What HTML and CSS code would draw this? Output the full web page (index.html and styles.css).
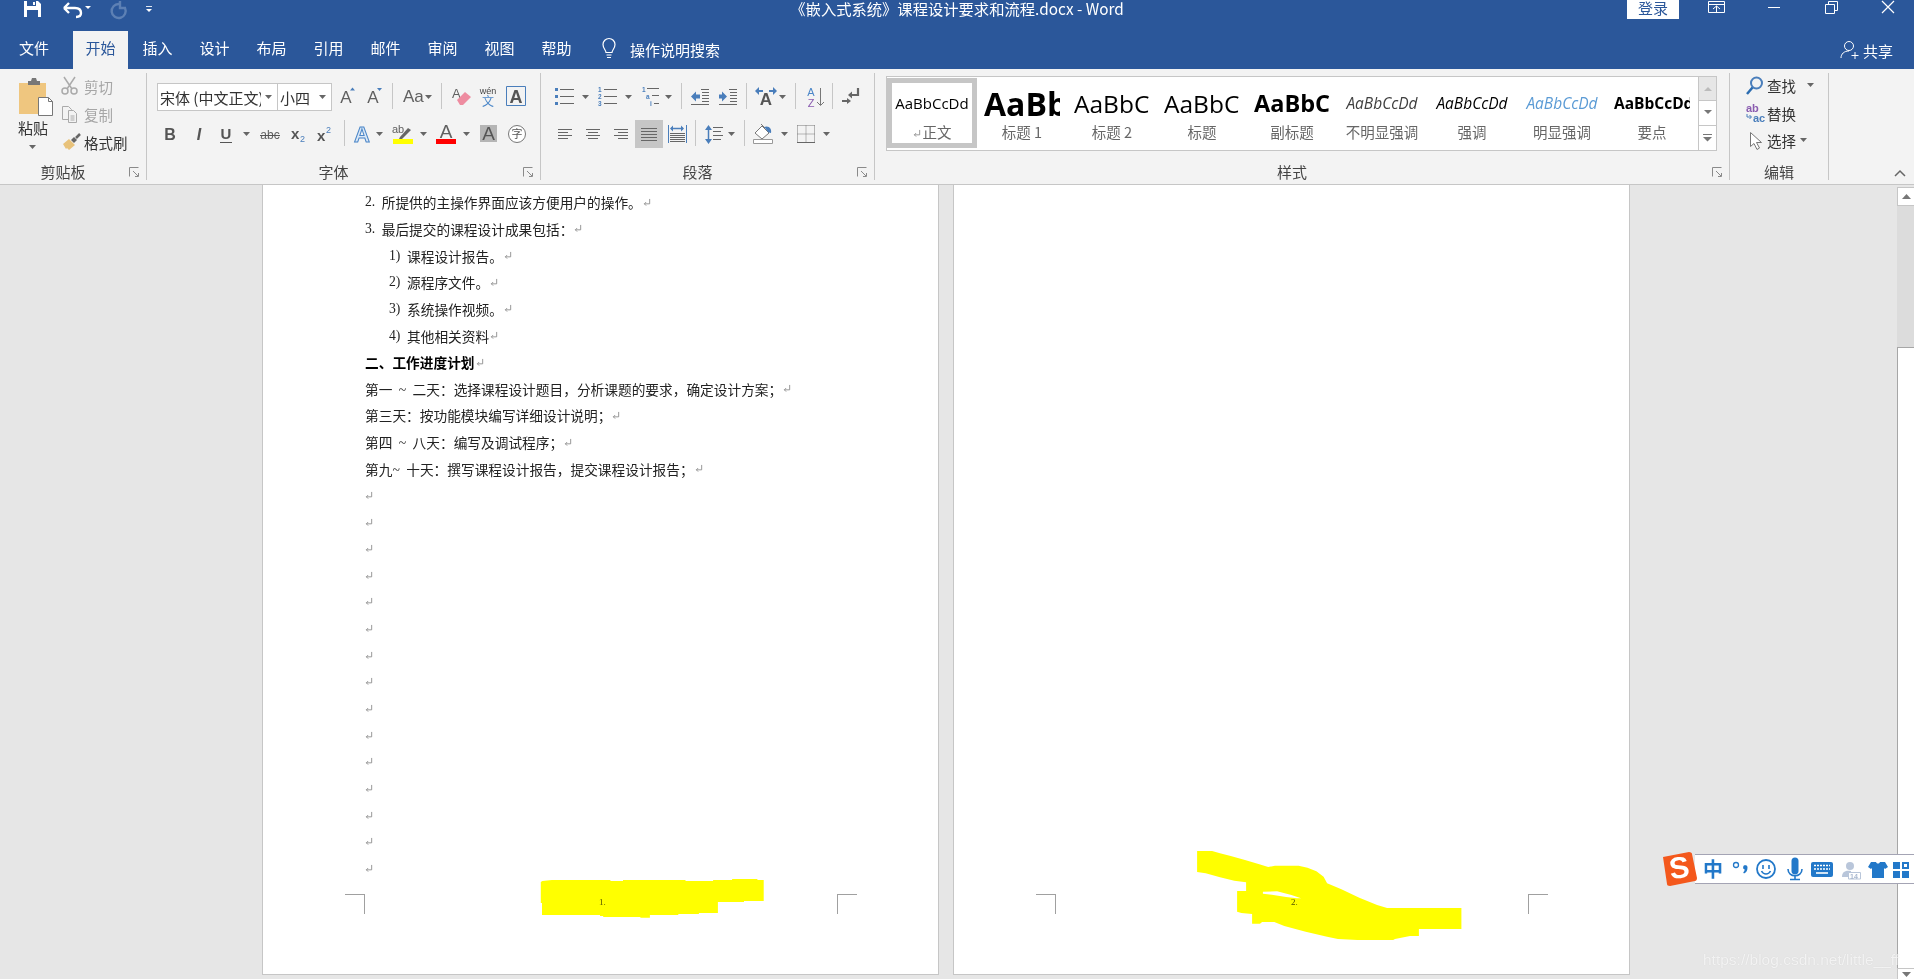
FILE: index.html
```html
<!DOCTYPE html>
<html lang="zh-CN">
<head>
    <meta charset="UTF-8">
    <title>《嵌入式系统》课程设计要求和流程.docx - Word</title>
    <link rel="stylesheet" href="styles.css">
</head>
<body>
    <svg class="defs" width="0" height="0">
        <symbol id="ret" viewBox="0 0 9 10"><path d="M7.500 1v5.500H1.500M3.500 4.500l-2 2 2 2" fill="none" stroke="#8c8c8c"/></symbol>
    </svg>

    <!-- Title bar -->
    <header class="titlebar">
        <div class="qat">
            <svg width="37" height="31" viewBox="0 0 37 31"><path d="M0 1h14l3 3v13H0z" fill="#fff"/><path d="M3 1h9v5H3zM3 10h11v7H3z" fill="#2b579a"/><path d="M9 2h2v3H9z" fill="#fff"/></svg>
            <svg width="46" height="31" viewBox="0 0 46 31"><path d="M3 8l5-5M3 8l5 5M3 8h11c4 0 6 2 6 5s-2 4-5 4" fill="none" stroke="#fff" stroke-width="2.400"/><path class="car-w" d="M24 6h6l-3 3z"/></svg>
            <svg width="36" height="31" viewBox="0 0 36 31"><path d="M12 4a7 7 0 1 0 6 4M13 1v7h6" fill="none" stroke="#5d80b4" stroke-width="2.400"/></svg>
            <svg width="14" height="31" viewBox="0 0 14 31"><path d="M3 6h6v1H3z" fill="#dfe6f1"/><path class="car-w" d="M3 9h6l-3 3z"/></svg>
        </div>
        <div class="doc-title">《嵌入式系统》课程设计要求和流程.docx - Word</div>
        <div class="win-controls">
            <span class="login">登录</span>
            <svg width="57" height="18" viewBox="0 0 57 18"><path d="M20.500 1.500h16v11h-16zM20.500 4.500h16" fill="none" stroke="#fff"/><path d="M25 9l3.500-3 3.500 3M28.500 6v6" fill="none" stroke="#fff"/></svg>
            <svg width="58" height="18" viewBox="0 0 58 18"><path d="M23 7.500h12" stroke="#fff"/></svg>
            <svg width="57" height="18" viewBox="0 0 57 18"><path d="M22.500 4.500h9v9h-9zM25.500 4.500v-3h9v9h-3" fill="none" stroke="#fff"/></svg>
            <svg width="54" height="18" viewBox="0 0 54 18"><path d="M22 1l12 12M34 1L22 13" stroke="#fff" stroke-width="1.200"/></svg>
        </div>
    </header>

    <!-- Ribbon tabs -->
    <nav class="tabs">
        <span class="tab tab-file">文件</span>
        <span class="tab active">开始</span>
        <span class="tab">插入</span>
        <span class="tab">设计</span>
        <span class="tab">布局</span>
        <span class="tab">引用</span>
        <span class="tab">邮件</span>
        <span class="tab">审阅</span>
        <span class="tab">视图</span>
        <span class="tab">帮助</span>
        <div class="tell-me">
            <svg width="14" height="24" viewBox="0 0 14 24"><path d="M4 15.500c0-2.500-3-4-3-8a6 6 0 0 1 12 0c0 4-3 5.500-3 8zM4.500 18h5M5 20.500h4" fill="none" stroke="#fff" stroke-width="1.200"/></svg>
            <span>操作说明搜索</span>
        </div>
        <div class="share">
            <svg width="20" height="20" viewBox="0 0 20 20"><circle cx="9" cy="6" r="4.500" fill="none" stroke="#fff"/><path d="M1 18c0-4 3-7 8-7M11.500 15.500h7M15 12v7" fill="none" stroke="#fff"/></svg>
            <span>共享</span>
        </div>
    </nav>

    <!-- Ribbon -->
    <section class="ribbon">
        <div class="group group-clip">
            <div class="clip-body">
                <div class="paste">
                    <svg class="paste-icon" width="40" height="42" viewBox="0 0 40 42"><path d="M4 7h27v31H4z" fill="#efc67f"/><path d="M13 5h3l1-3h4l1 3h3v4H13z" fill="#777"/><path d="M23.500 21.500h10l4 4v14h-14z" fill="#fff" stroke="#777"/><path d="M33.500 21.500v4h4" fill="none" stroke="#777"/></svg>
                    <span>粘贴</span>
                    <svg width="8" height="6" viewBox="0 0 8 6"><path class="car" d="M0 1h7L3.500 5z"/></svg>
                </div>
                <div class="clip-tools">
                    <div class="clip-tool off">
                        <svg width="22" height="22" viewBox="0 0 22 22"><circle cx="4" cy="16" r="3" fill="none" stroke="#aaa" stroke-width="1.500"/><circle cx="13" cy="16" r="3" fill="none" stroke="#aaa" stroke-width="1.500"/><path d="M3 2l8 12M14 2L6 14" stroke="#aaa" stroke-width="1.500"/></svg>
                        <span>剪切</span>
                    </div>
                    <div class="clip-tool off">
                        <svg width="22" height="22" viewBox="0 0 22 22"><path d="M1.500 3.500h6l3 3v10h-9z" fill="#f3f3f3" stroke="#aaa"/><path d="M7.500 7.500h5l3 3v9h-8z" fill="#f3f3f3" stroke="#aaa"/><path d="M9.500 13h4M9.500 15h4M9.500 17h4" stroke="#aaa"/></svg>
                        <span>复制</span>
                    </div>
                    <div class="clip-tool">
                        <svg width="22" height="22" viewBox="0 0 22 22"><path d="M2 13l6-5 6 6-6 5-2-2-1 1z" fill="#e8c27a"/><path d="M10 9l3-3 3 3-3 3z" fill="#666"/><path d="M15 7l4-4" stroke="#666" stroke-width="2.500"/></svg>
                        <span>格式刷</span>
                    </div>
                </div>
            </div>
            <div class="group-foot"><span class="foot-label">剪贴板</span><svg class="launcher" width="20" height="16" viewBox="0 0 20 16"><path d="M3.500 12.500v-9h9M7 7l5 5M12.500 9v3.500H9" fill="none" stroke="#8a8a8a"/></svg></div>
        </div>

        <div class="group group-font">
            <div class="rows">
                <div class="row">
                    <div class="combo combo-font"><span class="combo-text">宋体 (中文正文)</span><svg width="16" height="6" viewBox="0 0 16 6"><path class="car" d="M4 1h7L7.500 5z"/></svg></div>
                    <div class="combo combo-size"><span class="combo-text">小四</span><svg width="16" height="6" viewBox="0 0 16 6"><path class="car" d="M4 1h7L7.500 5z"/></svg></div>
                    <svg width="28" height="28" viewBox="0 0 28 28"><text class="g" x="14" y="20" text-anchor="middle" font-size="17">A</text><path class="bl" d="M18 7.500l2.500-3 2.500 3z"/></svg>
                    <svg width="28" height="28" viewBox="0 0 28 28"><text class="g" x="13" y="20" text-anchor="middle" font-size="17">A</text><path class="bl" d="M17 5h5l-2.500 3z"/></svg>
                    <i class="sep"></i>
                    <svg width="40" height="28" viewBox="0 0 40 28"><text class="g" x="6" y="19" font-size="17">Aa</text><path class="car" d="M28 12h7l-3.500 4z"/></svg>
                    <i class="sep"></i>
                    <svg width="32" height="28" viewBox="0 0 32 28"><text class="g" x="6" y="15" font-size="13">A</text><path d="M11 17l8-8 6 5-8 8h-3z" fill="#ee8ca0"/></svg>
                    <svg width="20" height="28" viewBox="0 0 20 28"><text x="10" y="11" text-anchor="middle" font-size="9" fill="#444">wén</text><text x="10" y="23" text-anchor="middle" font-size="12" fill="#4a86c8">文</text></svg>
                    <svg width="36" height="28" viewBox="0 0 36 28"><path d="M8.500 3.500h19v19h-19z" fill="none" stroke="#4a7ebb"/><text class="g g-b" x="18" y="20" text-anchor="middle" font-size="18">A</text></svg>
                </div>
                <div class="row">
                    <svg width="26" height="28" viewBox="0 0 26 28"><text class="g g-b" x="13" y="20" text-anchor="middle" font-size="16">B</text></svg>
                    <svg width="32" height="28" viewBox="0 0 32 28"><text class="g g-b" x="16" y="20" text-anchor="middle" font-size="16" font-style="italic">I</text></svg>
                    <svg width="42" height="28" viewBox="0 0 42 28"><text class="g g-b" x="11" y="19" text-anchor="middle" font-size="15">U</text><path d="M5 22.500h12" stroke="#555"/><path class="car" d="M28 12h7l-3.500 4z"/></svg>
                    <svg width="28" height="28" viewBox="0 0 28 28"><text class="g" x="13" y="19" text-anchor="middle" font-size="12">abc</text><path d="M3 15.500h20" stroke="#555"/></svg>
                    <svg width="26" height="28" viewBox="0 0 26 28"><text class="g g-b" x="6" y="19" font-size="15">x</text><text x="15" y="22" font-size="9" fill="#4a7ebb">2</text></svg>
                    <svg width="26" height="28" viewBox="0 0 26 28"><text class="g g-b" x="6" y="21" font-size="15">x</text><text x="15" y="13" font-size="9" fill="#4a7ebb">2</text></svg>
                    <i class="sep sep-wide"></i>
                    <svg width="40" height="28" viewBox="0 0 40 28"><text x="13" y="22" text-anchor="middle" font-size="22" font-weight="700" fill="#dbe8f6" stroke="#4a86c8">A</text><path class="car" d="M27 12h7l-3.500 4z"/></svg>
                    <svg width="44" height="28" viewBox="0 0 44 28"><text class="g" x="3" y="13" font-size="11">ab</text><path d="M11 17l8-9 3 2-9 9h-3z" fill="#666"/><path d="M4 19h20v5H4z" fill="#ff0"/><path class="car" d="M31 12h7l-3.500 4z"/></svg>
                    <svg width="43" height="28" viewBox="0 0 43 28"><text class="g" x="13" y="18" text-anchor="middle" font-size="19">A</text><path d="M3 19h20v5H3z" fill="#f00"/><path class="car" d="M30 12h7l-3.500 4z"/></svg>
                    <svg width="27" height="28" viewBox="0 0 27 28"><path d="M4 5h17v17H4z" fill="#b5b5b5"/><text class="g g-d" x="12.500" y="20" text-anchor="middle" font-size="19">A</text></svg>
                    <svg width="28" height="28" viewBox="0 0 28 28"><circle cx="14" cy="14" r="8.500" fill="#fff" stroke="#777"/><text x="14" y="18" text-anchor="middle" font-size="11" fill="#555">字</text></svg>
                </div>
            </div>
            <div class="group-foot"><span class="foot-label">字体</span><svg class="launcher" width="20" height="16" viewBox="0 0 20 16"><path d="M3.500 12.500v-9h9M7 7l5 5M12.500 9v3.500H9" fill="none" stroke="#8a8a8a"/></svg></div>
        </div>

        <div class="group group-para">
            <div class="rows">
                <div class="row">
                    <svg width="44" height="28" viewBox="0 0 44 28"><path class="bl" d="M3 5h3v3H3zM3 12h3v3H3zM3 19h3v3H3z"/><path class="ln" d="M8 6.500h14M8 13.500h14M8 20.500h14"/><path class="car" d="M30 12h7l-3.500 4z"/></svg>
                    <svg width="44" height="28" viewBox="0 0 44 28"><text class="num" x="2" y="9">1</text><text class="num" x="2" y="16">2</text><text class="num" x="2" y="23">3</text><path class="ln" d="M8 6.500h13M8 13.500h13M8 20.500h13"/><path class="car" d="M29 12h7l-3.500 4z"/></svg>
                    <svg width="37" height="28" viewBox="0 0 37 28"><text class="num" x="2" y="9">1</text><text class="num" x="6" y="16">a</text><text class="num" x="10" y="23">i</text><path class="ln" d="M7 5.500h12M12 12.500h7M14 20.500h5"/><path class="car" d="M25 12h7l-3.500 4z"/></svg>
                    <i class="sep"></i>
                    <svg width="28" height="28" viewBox="0 0 28 28"><path class="bl" d="M5 13.500l5-5v3h4v4h-4v3z"/><path class="ln" d="M15 6.500h8M16 9.500h7M16 12.500h7M16 15.500h7M16 18.500h7M5 21.500h18"/></svg>
                    <svg width="28" height="28" viewBox="0 0 28 28"><path class="bl" d="M13 13.500l-5-5v3H5v4h3v3z"/><path class="ln" d="M15 6.500h8M16 9.500h7M16 12.500h7M16 15.500h7M16 18.500h7M5 21.500h18"/></svg>
                    <i class="sep"></i>
                    <svg width="40" height="28" viewBox="0 0 40 28"><path class="bl" d="M4 8l4-4v3h4v2H8v3zM26 8l-4-4v3h-4v2h4v3z"/><text class="g g-b" x="15" y="22" text-anchor="middle" font-size="17">A</text><path class="car" d="M28 12h7l-3.500 4z"/></svg>
                    <i class="sep"></i>
                    <svg width="28" height="28" viewBox="0 0 28 28"><text x="11" y="13" text-anchor="middle" font-size="11" fill="#4a86c8">A</text><text x="11" y="24" text-anchor="middle" font-size="11" fill="#8a5cb0">Z</text><path d="M20.500 5v17M17 19l3.500 3.500L24 19" fill="none" stroke="#777"/></svg>
                    <i class="sep"></i>
                    <svg width="28" height="28" viewBox="0 0 28 28"><path d="M21 5v7h-7" fill="none" stroke="#666" stroke-width="2.200"/><path d="M15 8.500v7l-4-3.500z" fill="#666"/><path d="M5 18h6" stroke="#666" stroke-width="2"/><path d="M10 15l4 3-4 3z" fill="#666"/></svg>
                </div>
                <div class="row">
                    <svg width="27" height="28" viewBox="0 0 27 28"><path class="ln" d="M6 9.500h14M6 12.500h10M6 15.500h14M6 18.500h10"/></svg>
                    <svg width="28" height="28" viewBox="0 0 28 28"><path class="ln" d="M7 9.500h14M9 12.500h10M7 15.500h14M9 18.500h10"/></svg>
                    <svg width="28" height="28" viewBox="0 0 28 28"><path class="ln" d="M7 9.500h14M11 12.500h10M7 15.500h14M11 18.500h10"/></svg>
                    <svg class="pressed" width="28" height="28" viewBox="0 0 28 28"><path class="ln" d="M6 8.500h16M6 11.500h16M6 14.500h16M6 17.500h16M6 20.500h16"/></svg>
                    <svg width="28" height="28" viewBox="0 0 28 28"><path d="M5.500 5v18M23.500 5v18" stroke="#4a7ebb"/><path d="M8 8.500h12" stroke="#4a7ebb" stroke-width="1.500"/><path class="bl" d="M7 8.500l3-3v6zM21 8.500l-3-3v6z"/><path class="ln" d="M7 13.500h15M7 15.500h15M7 17.500h15M7 19.500h15M7 21.500h15"/></svg>
                    <i class="sep"></i>
                    <svg width="40" height="28" viewBox="0 0 40 28"><path d="M8.500 7v15" stroke="#4a7ebb" stroke-width="1.500"/><path class="bl" d="M5 10l3.500-5 3.500 5zM5 19l3.500 5 3.500-5z"/><path class="ln" d="M13 7.500h10M13 11.500h8M13 15.500h10M13 19.500h8"/><path class="car" d="M28 12h7l-3.500 4z"/></svg>
                    <i class="sep"></i>
                    <svg width="42" height="28" viewBox="0 0 42 28"><path d="M6 13l7-7 7 7-7 6z" fill="#fff" stroke="#777"/><path d="M12 4l4 4" stroke="#777"/><path d="M15 7c5-2 8 2 7 6-3 0-4-3-7-6z" fill="#4a7ebb"/><path d="M4.500 19.500h19v4h-19z" fill="#fff" stroke="#999"/><path class="car" d="M32 12h7l-3.500 4z"/></svg>
                    <svg width="44" height="28" viewBox="0 0 44 28"><path d="M6.500 5.500h17M6.500 5.500v17M23.500 5.500v17M15 5.500v17M6.500 14h17" fill="none" stroke="#777" stroke-dasharray="1 1"/><path d="M6 22.500h18" stroke="#666"/><path class="car" d="M32 12h7l-3.500 4z"/></svg>
                </div>
            </div>
            <div class="group-foot"><span class="foot-label">段落</span><svg class="launcher" width="20" height="16" viewBox="0 0 20 16"><path d="M3.500 12.500v-9h9M7 7l5 5M12.500 9v3.500H9" fill="none" stroke="#8a8a8a"/></svg></div>
        </div>

        <div class="group group-styles">
            <div class="gallery">
                <div class="style-cell selected"><div class="sample s-normal">AaBbCcDd</div><div class="style-name"><svg class="ret" viewBox="0 0 9 10"><use href="#ret"/></svg>正文</div></div>
                <div class="style-cell"><div class="sample s-h1">AaBb</div><div class="style-name">标题 1</div></div>
                <div class="style-cell"><div class="sample s-h2">AaBbC</div><div class="style-name">标题 2</div></div>
                <div class="style-cell"><div class="sample s-h2">AaBbC</div><div class="style-name">标题</div></div>
                <div class="style-cell"><div class="sample s-sub">AaBbCc</div><div class="style-name">副标题</div></div>
                <div class="style-cell"><div class="sample s-em s-faint">AaBbCcDd</div><div class="style-name">不明显强调</div></div>
                <div class="style-cell"><div class="sample s-em">AaBbCcDd</div><div class="style-name">强调</div></div>
                <div class="style-cell"><div class="sample s-em s-blue">AaBbCcDd</div><div class="style-name">明显强调</div></div>
                <div class="style-cell"><div class="sample s-strong">AaBbCcDd</div><div class="style-name">要点</div></div>
                <div class="gallery-scroll">
                    <span class="gs-btn gs-off"><svg width="8" height="5" viewBox="0 0 8 5"><path d="M0 5l4-4 4 4z" fill="#bbb"/></svg></span>
                    <span class="gs-btn"><svg width="8" height="5" viewBox="0 0 8 5"><path d="M0 0h8L4 4z" fill="#777"/></svg></span>
                    <span class="gs-btn gs-last"><svg width="9" height="8" viewBox="0 0 9 8"><path d="M0 .5h9" stroke="#777"/><path d="M0 3h9L4.500 7.500z" fill="#777"/></svg></span>
                </div>
            </div>
            <div class="group-foot"><span class="foot-label">样式</span><svg class="launcher" width="20" height="16" viewBox="0 0 20 16"><path d="M3.500 12.500v-9h9M7 7l5 5M12.500 9v3.500H9" fill="none" stroke="#8a8a8a"/></svg></div>
        </div>

        <div class="group group-edit">
            <div class="edit-col">
                <div class="edit-tool">
                    <svg width="22" height="22" viewBox="0 0 22 22"><circle cx="11.500" cy="8" r="5.500" fill="none" stroke="#4a7ebb" stroke-width="2"/><path d="M7.500 12.500L2 19" stroke="#2b6cb0" stroke-width="2.500"/></svg>
                    <span>查找</span><svg class="edit-car" width="7" height="5" viewBox="0 0 7 5"><path class="car" d="M0 0h7L3.500 4z"/></svg>
                </div>
                <div class="edit-tool">
                    <svg width="22" height="22" viewBox="0 0 22 22"><text x="1" y="10" font-size="11" font-weight="700" fill="#8a5cb0">ab</text><text x="8" y="20" font-size="11" font-weight="700" fill="#4a7ebb">ac</text><path d="M2 12v3h4M4.500 13l2 2-2 2" fill="none" stroke="#4a7ebb"/></svg>
                    <span>替换</span>
                </div>
                <div class="edit-tool">
                    <svg width="22" height="22" viewBox="0 0 22 22"><path d="M5.500 2.500v14l3.500-3 3 6 2.500-1.500-3-5.500h5z" fill="#fff" stroke="#777"/></svg>
                    <span>选择</span><svg class="sel-car" width="7" height="5" viewBox="0 0 7 5"><path class="car" d="M0 0h7L3.500 4z"/></svg>
                </div>
            </div>
            <div class="group-foot"><span class="foot-label">编辑</span></div>
        </div>

        <div class="ribbon-end">
            <svg width="14" height="8" viewBox="0 0 14 8"><path d="M2 7l5-5 5 5" fill="none" stroke="#666" stroke-width="1.500"/></svg>
        </div>
    </section>

    <!-- Document area -->
    <main class="workspace">
        <div class="pages">
            <article class="page">
                <p class="line"><span class="num-1">2.</span>所提供的主操作界面应该方便用户的操作。<svg class="ret" viewBox="0 0 9 10"><use href="#ret"/></svg></p>
                <p class="line"><span class="num-1">3.</span>最后提交的课程设计成果包括：<svg class="ret" viewBox="0 0 9 10"><use href="#ret"/></svg></p>
                <p class="line sub"><span class="num-2">1)</span>课程设计报告。<svg class="ret" viewBox="0 0 9 10"><use href="#ret"/></svg></p>
                <p class="line sub"><span class="num-2">2)</span>源程序文件。<svg class="ret" viewBox="0 0 9 10"><use href="#ret"/></svg></p>
                <p class="line sub"><span class="num-2">3)</span>系统操作视频。<svg class="ret" viewBox="0 0 9 10"><use href="#ret"/></svg></p>
                <p class="line sub"><span class="num-2">4)</span>其他相关资料<svg class="ret" viewBox="0 0 9 10"><use href="#ret"/></svg></p>
                <p class="line bold">二、工作进度计划<svg class="ret" viewBox="0 0 9 10"><use href="#ret"/></svg></p>
                <p class="line">第一 ~ 二天：选择课程设计题目，分析课题的要求，确定设计方案；<svg class="ret" viewBox="0 0 9 10"><use href="#ret"/></svg></p>
                <p class="line">第三天：按功能模块编写详细设计说明；<svg class="ret" viewBox="0 0 9 10"><use href="#ret"/></svg></p>
                <p class="line">第四 ~ 八天：编写及调试程序；<svg class="ret" viewBox="0 0 9 10"><use href="#ret"/></svg></p>
                <p class="line">第九~ 十天：撰写课程设计报告，提交课程设计报告；<svg class="ret" viewBox="0 0 9 10"><use href="#ret"/></svg></p>
                <p class="line"><svg class="ret first" viewBox="0 0 9 10"><use href="#ret"/></svg></p>
                <p class="line"><svg class="ret first" viewBox="0 0 9 10"><use href="#ret"/></svg></p>
                <p class="line"><svg class="ret first" viewBox="0 0 9 10"><use href="#ret"/></svg></p>
                <p class="line"><svg class="ret first" viewBox="0 0 9 10"><use href="#ret"/></svg></p>
                <p class="line"><svg class="ret first" viewBox="0 0 9 10"><use href="#ret"/></svg></p>
                <p class="line"><svg class="ret first" viewBox="0 0 9 10"><use href="#ret"/></svg></p>
                <p class="line"><svg class="ret first" viewBox="0 0 9 10"><use href="#ret"/></svg></p>
                <p class="line"><svg class="ret first" viewBox="0 0 9 10"><use href="#ret"/></svg></p>
                <p class="line"><svg class="ret first" viewBox="0 0 9 10"><use href="#ret"/></svg></p>
                <p class="line"><svg class="ret first" viewBox="0 0 9 10"><use href="#ret"/></svg></p>
                <p class="line"><svg class="ret first" viewBox="0 0 9 10"><use href="#ret"/></svg></p>
                <p class="line"><svg class="ret first" viewBox="0 0 9 10"><use href="#ret"/></svg></p>
                <p class="line"><svg class="ret first" viewBox="0 0 9 10"><use href="#ret"/></svg></p>
                <p class="line"><svg class="ret first" viewBox="0 0 9 10"><use href="#ret"/></svg></p>
                <p class="line"><svg class="ret first" viewBox="0 0 9 10"><use href="#ret"/></svg></p>
                <span class="crop crop-l c1-l"></span>
                <span class="crop crop-r c1-r"></span>
                <span class="page-num pn-1">1.</span>
            </article>
            <article class="page">
                <span class="crop crop-l c2-l"></span>
                <span class="crop crop-r c2-r"></span>
                <span class="page-num pn-2">2.</span>
            </article>
        </div>
        <aside class="scrollbar">
            <div class="sb-btn"><svg width="9" height="5" viewBox="0 0 9 5"><path d="M0 5l4.500-5L9 5z" fill="#777"/></svg></div>
            <div class="sb-track"></div>
            <div class="sb-thumb"></div>
            <div class="sb-btn sb-down"><svg width="9" height="5" viewBox="0 0 9 5"><path d="M0 0h9L4.500 5z" fill="#777"/></svg></div>
        </aside>
    </main>

    <!-- Yellow marker over the page numbers -->
    <svg class="marker" width="1914" height="979" viewBox="0 0 1914 979">
        <path fill="#ff0" d="M540.800 882l1.600-1 9.500-1h58.500v1H623v-1h62.500v1h27.600v-1h19v-1h25.300v1h6.300v21h-19.700v1h-26.100v11h-19v1h-20.600v1h-28.400v2.700h-9.500V917h-37.200v-1H600v-1h-58v-12h-1.200z"/>
        <path fill="#ff0" fill-rule="evenodd" d="M1197.100 851L1212.100 851 1220 853.300 1230.700 856 1245 860 1259.300 864.300 1268.200 867 1275 865.700 1298.600 865.700 1307.500 867.700 1316.400 871.300 1323.600 876.700 1327.100 883.300 1341.400 889.300 1359.300 897.700 1377.100 905 1387.100 908 1461.400 908 1461.400 929 1418.900 929 1418.900 936 1410 936 1395 939 1393.200 940 1357.500 940 1337.900 939 1327.100 936.700 1305.700 931.700 1284.300 926 1274.300 922 1262.100 922 1260 923.700 1252.100 923.700 1252.100 914 1241.400 913 1237.100 911.700 1237.100 891 1246.100 891 1246.100 882.300 1234.300 880.700 1220 877.300 1205.700 873.300 1197.100 872zM1262.900 891.700L1277.100 891.300 1291.400 895 1301.100 898.300 1296.800 898.300 1286.100 897 1271.800 894.700 1262.900 893.700z"/>
    </svg>

    <!-- Sogou IME bar -->
    <div class="ime">
        <svg width="25" height="30" viewBox="0 0 25 30"><text class="ime-i" x="0" y="23">中</text></svg>
        <svg width="24" height="30" viewBox="0 0 24 30"><circle cx="8" cy="11" r="2.500" fill="none" stroke="#2278c9" stroke-width="1.300"/><path d="M17 11a2.500 2.500 0 0 1 2.500 2.500c0 3-1 5-3.500 6l-.8-1c1-1 1.500-2 1.500-3a2.300 2.300 0 0 1 .8-4.500z" fill="#2278c9"/></svg>
        <svg width="29" height="30" viewBox="0 0 29 30"><circle cx="14" cy="15" r="9" fill="none" stroke="#2278c9" stroke-width="1.800"/><path d="M11 11v4M17 11v4" stroke="#2278c9" stroke-width="1.600"/><path d="M9.500 17c2 4 7 4 9 0" fill="none" stroke="#2278c9" stroke-width="1.600"/></svg>
        <svg width="26" height="30" viewBox="0 0 26 30"><path d="M10.500 7a3.500 3.500 0 0 1 7 0v10a3.500 3.500 0 0 1-7 0z" fill="#2278c9"/><path d="M7 15c0 9 14 9 14 0M14 22v3M9 25.500h10" fill="none" stroke="#2278c9" stroke-width="1.600"/></svg>
        <svg width="28" height="30" viewBox="0 0 28 30"><path d="M6 8h18a2 2 0 0 1 2 2v11a2 2 0 0 1-2 2H6a2 2 0 0 1-2-2V10a2 2 0 0 1 2-2z" fill="#2278c9"/><path d="M7 11.500h16M7 15h16" stroke="#fff" stroke-width="1.500" stroke-dasharray="2 1"/><path d="M9 19h12" stroke="#fff" stroke-width="1.600"/></svg>
        <svg width="29" height="30" viewBox="0 0 29 30"><circle cx="15" cy="12" r="4" fill="#b9c6da"/><path d="M7 23c0-5 3-7 9-6v6z" fill="#b9c6da"/><path d="M13.500 18.500h12v6.500h-12z" fill="#fff" stroke="#b9c6da"/><text x="15" y="24.500" font-size="7" fill="#a9b8cf" font-weight="700">14</text></svg>
        <svg width="24" height="30" viewBox="0 0 24 30"><path d="M7 8l5 0c1 2 3 2 4 0l5 0 3 5-3 2-1-1v10H8V14l-1 1-3-2z" fill="#2278c9"/></svg>
        <svg width="26" height="30" viewBox="0 0 26 30"><path d="M5 8h7v7H5zM14 8h7v7h-7zM5 17h7v7H5zM14 17h7v7h-7z" fill="#2278c9"/><path d="M16 10h3v3h-3z" fill="#fff"/></svg>
    </div>
    <svg class="ime-logo" width="38" height="38" viewBox="0 0 38 38">
        <path d="M3 7l26-5c2 0 3 1 3 2l5 24c0 2-1 3-2 3L10 36c-2 0-3-1-3-2z" fill="#f4581c"/>
        <text x="19.500" y="28" text-anchor="middle" font-size="30" font-weight="700" fill="#fff" transform="rotate(-8 19 19)">S</text>
    </svg>

    <div class="watermark">https://blog.csdn.net/little__ff</div>
</body>
</html>
```

FILE: styles.css
```css
html, body {
    margin: 0;
    height: 100%;
}

body {
    position: relative;
    display: flex;
    flex-direction: column;
    height: 100vh;
    overflow: hidden;
    background: #e6e6e6;
    font-family: "Noto Sans CJK SC", "Liberation Sans", sans-serif;
    color: #444;
}

svg {
    display: block;
    flex: none;
}

svg text {
    font-family: "Liberation Sans", "Noto Sans CJK SC", sans-serif;
}

.defs {
    position: absolute;
}

/* Title bar */
.titlebar {
    display: grid;
    grid-template-columns: 1fr auto 1fr;
    height: 31px;
    flex: none;
    background: #2b579a;
    color: #fff;
}

.qat {
    display: flex;
    padding-left: 24px;
}

.doc-title {
    font-size: 15.300px;
    line-height: 16px;
    white-space: nowrap;
}

.win-controls {
    display: flex;
    justify-content: flex-end;
}

.login {
    width: 52px;
    height: 19px;
    margin-right: 9px;
    background: #fff;
    color: #2b579a;
    font-size: 15px;
    line-height: 16px;
    text-align: center;
}

.car-w { fill: #fff; }
.car { fill: #666; }

/* Tabs */
.tabs {
    display: flex;
    gap: 2px;
    height: 38px;
    flex: none;
    padding-left: 6.500px;
    background: #2b579a;
    color: #fff;
    font-size: 15px;
}

.tab {
    width: 55px;
    line-height: 34px;
    text-align: center;
}

.tab-file {
    margin-right: 9.500px;
}

.tab.active {
    background: #f3f3f3;
    color: #2b579a;
}

.tell-me {
    display: flex;
    align-items: center;
    gap: 14px;
    margin: 0 0 2px 16px;
}

.share {
    display: flex;
    align-items: center;
    gap: 3px;
    margin: 0 21px 0 auto;
}

/* Ribbon */
.ribbon {
    display: flex;
    height: 115px;
    flex: none;
    background: #f3f3f3;
    border-bottom: 1px solid #c6c6c6;
}

.group {
    display: flex;
    flex-direction: column;
    height: 107px;
    margin-top: 4px;
    flex: none;
    border-right: 1px solid #c6c6c6;
}

.group-clip { width: 146px; }
.group-font { width: 393px; }
.group-para { width: 333px; }
.group-styles { width: 854px; }
.group-edit { width: 98px; }

.group-foot {
    display: flex;
    margin-top: auto;
    height: 16px;
    font-size: 15px;
    line-height: 16px;
}

.foot-label {
    flex: 1;
    text-align: center;
}

.ribbon-end {
    display: flex;
    align-items: flex-end;
    justify-content: flex-end;
    flex: 1;
    padding: 0 7px 7px 0;
}

/* Clipboard */
.clip-body {
    display: flex;
}

.paste {
    display: flex;
    flex-direction: column;
    align-items: center;
    width: 50px;
    margin: 3px 0 0 8px;
    font-size: 15px;
    line-height: 19px;
    color: #333;
}

.paste-icon {
    margin-left: 4px;
}

.paste span {
    margin-bottom: 7px;
}

.clip-tools {
    margin: -1px 0 0 3px;
}

.clip-tool {
    display: flex;
    align-items: center;
    height: 28px;
    font-size: 14.500px;
    color: #333;
}

.clip-tool.off {
    color: #a6a6a6;
}

.clip-tool span {
    margin-left: 1px;
}

/* Toolbars */
.rows {
    display: flex;
    flex-direction: column;
    gap: 9px;
    padding-top: 10px;
}

.row {
    display: flex;
    height: 28px;
}

.group-font .rows { padding-left: 10px; }
.group-para .rows { padding-left: 11px; }

.sep {
    display: block;
    width: 1px;
    height: 26px;
    margin: 0 4px;
    background: #c6c6c6;
    flex: none;
}

.sep-wide {
    margin-left: 7px;
}

.combo {
    display: flex;
    align-items: center;
    box-sizing: border-box;
    height: 28px;
    background: #fff;
    border: 1px solid #c6c6c6;
    color: #333;
    font-size: 15px;
    flex: none;
}

.combo-font { width: 121px; }
.combo-size { width: 55px; margin-left: -1px; }

.combo-text {
    flex: 1;
    overflow: hidden;
    padding-left: 2px;
    white-space: nowrap;
}

.g {
    fill: #606060;
}

.g-b {
    font-weight: 700;
    fill: #555;
}

.g-d {
    fill: #555;
}

.bl { fill: #4a7ebb; }

.ln {
    fill: none;
    stroke: #666;
}

.num {
    font-size: 6.500px;
    font-weight: 700;
    fill: #4a7ebb;
}

.pressed {
    background: #c6c6c6;
}

/* Styles gallery */
.gallery {
    display: flex;
    box-sizing: border-box;
    width: 831px;
    height: 75px;
    margin: 3px 0 0 11px;
    background: #fff;
    border: 1px solid #c6c6c6;
}

.style-cell {
    box-sizing: border-box;
    width: 90px;
    height: 71px;
    margin-top: 1px;
    padding: 7px 7px 0;
    flex: none;
    text-align: center;
}

.style-cell.selected {
    padding: 2px 2px 0;
    border: 5px solid #c6c6c6;
    height: 70px;
}

.sample {
    height: 37px;
    overflow: hidden;
    white-space: nowrap;
    text-align: left;
    color: #000;
    font-family: "Open Sans", "Noto Sans", sans-serif;
    line-height: 37px;
}

.s-normal { font-size: 15px; text-align: center; }
.s-h1 { font-size: 32px; font-weight: 700; }
.s-h2 { font-size: 24.500px; }
.s-sub { font-size: 23.500px; font-weight: 700; }
.s-em { font-size: 15.500px; font-style: italic; text-align: center; }
.s-faint { color: #404040; }
.s-blue { color: #5b9bd5; }
.s-strong { font-size: 15.500px; font-weight: 700; }

.style-name {
    display: flex;
    justify-content: center;
    align-items: center;
    margin-top: 1px;
    font-size: 14.500px;
    line-height: 18px;
    color: #666;
}

.style-name .ret {
    margin: 3px 2px 0 0;
}

.gallery-scroll {
    display: flex;
    flex-direction: column;
    box-sizing: border-box;
    width: 18px;
    margin-left: 1px;
    border-left: 1px solid #c6c6c6;
    flex: none;
}

.gs-btn {
    display: flex;
    align-items: center;
    justify-content: center;
    height: 24.500px;
    border-bottom: 1px solid #c6c6c6;
    box-sizing: border-box;
}

.gs-off {
    background: #e6e6e6;
}

.gs-last {
    border-bottom: 0;
}

/* Editing */
.edit-col {
    margin-top: -1px;
    padding-left: 15px;
}

.edit-tool {
    display: flex;
    align-items: center;
    height: 27.500px;
    font-size: 14.500px;
    color: #333;
}

.edit-car { margin-left: 11px; }
.sel-car { margin-left: 4px; }

/* Document area */
.workspace {
    display: flex;
    flex: 1;
    min-height: 0;
}

.pages {
    display: flex;
    flex: 1;
    gap: 14px;
    padding-left: 262px;
}

.page {
    position: relative;
    box-sizing: border-box;
    width: 677px;
    height: 790px;
    padding: 4px 0 0 102px;
    background: #fff;
    border: 1px solid #c6c6c6;
    border-top: 0;
    font-family: "Liberation Serif", "Noto Sans CJK SC", serif;
    font-size: 13.700px;
    color: #222;
}

.line {
    display: flex;
    align-items: center;
    height: 26.650px;
    margin: 0;
    white-space: pre;
    word-spacing: 3px;
}

.line.sub { padding-left: 24px; }
.line.bold { font-weight: 700; color: #000; }

.num-1 { width: 16.700px; }
.num-2 { width: 18px; }

.ret {
    width: 8px;
    height: 9px;
    margin-left: 1px;
}

.ret.first {
    margin-left: 0;
}

.crop {
    position: absolute;
    top: 709px;
    width: 19px;
    height: 19px;
    border-top: 1px solid #a0a0a0;
}

.crop-l { border-right: 1px solid #a0a0a0; }
.crop-r { border-left: 1px solid #a0a0a0; }
.c1-l { left: 82px; }
.c1-r { left: 574px; }
.c2-l { left: 82px; }
.c2-r { left: 574px; }

.page-num {
    position: absolute;
    top: 711px;
    font-size: 9px;
    line-height: 12px;
    color: #555;
}

.pn-1 { left: 336px; }
.pn-2 { left: 337px; }

/* Scrollbar */
.scrollbar {
    display: flex;
    flex-direction: column;
    box-sizing: border-box;
    width: 17px;
    padding-top: 2px;
    flex: none;
}

.sb-btn {
    display: flex;
    align-items: center;
    justify-content: center;
    box-sizing: border-box;
    height: 19px;
    background: #fff;
    border: 1px solid #c6c6c6;
    border-right: 0;
    flex: none;
}

.sb-down {
    height: 11px;
    border-bottom: 0;
}

.sb-track {
    height: 141px;
    background: #dcdcdc;
    flex: none;
}

.sb-thumb {
    flex: 1;
    background: #fff;
    border: solid #a6a6a6;
    border-width: 1px 0 0 1px;
}

/* Overlays */
.marker {
    position: absolute;
    top: 0;
    left: 0;
    mix-blend-mode: multiply;
    pointer-events: none;
}

.ime {
    position: absolute;
    top: 854px;
    left: 1695px;
    display: flex;
    box-sizing: border-box;
    width: 219px;
    height: 30px;
    padding-left: 8px;
    background: #fff;
    border: solid #a4a4b4;
    border-width: 1px 0;
}

.ime svg {
    margin-top: -1px;
}

.ime-i {
    fill: #2278c9;
    font-size: 20px;
    font-weight: 700;
}

.ime-logo {
    position: absolute;
    top: 850px;
    left: 1660px;
}

.watermark {
    position: absolute;
    top: 950px;
    left: 1703px;
    font-family: "Liberation Sans", sans-serif;
    font-size: 15.500px;
    line-height: 20px;
    color: rgba(255, 255, 255, .75);
    text-shadow: 0 0 1px rgba(0, 0, 0, .12);
    white-space: nowrap;
}
```
